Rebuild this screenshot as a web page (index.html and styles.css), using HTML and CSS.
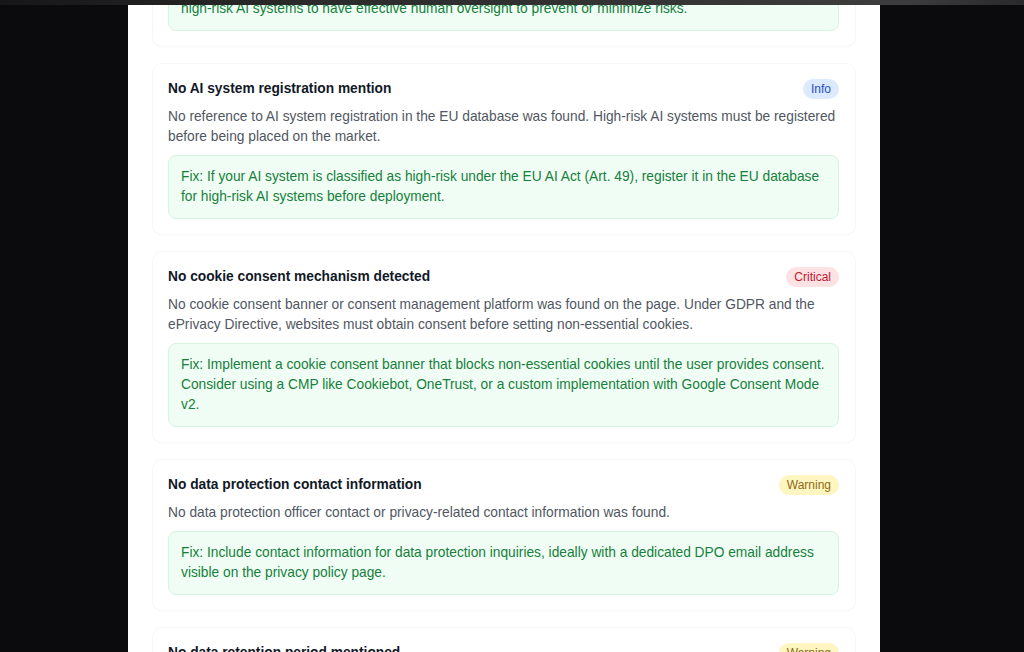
FILE: index.html
```html
<!DOCTYPE html>
<html lang="en">
<head>
<meta charset="utf-8">
<title>Compliance findings</title>
<link rel="stylesheet" href="styles.css">
</head>
<body>
<div class="topbar"></div>
<div class="stage">
  <main class="panel">
    <div class="findings">
      <section class="card">
        <div class="card-head">
          <h3 class="card-title">No human oversight measures described</h3>
          <span class="badge badge-warning">Warning</span>
        </div>
        <p class="card-desc">No information about human review of automated decisions or AI outputs was found.</p>
        <div class="fix">Fix: Describe how users can request human review of AI decisions. The EU AI Act (Art. 14) requires<br>high-risk AI systems to have effective human oversight to prevent or minimize risks.</div>
      </section>

      <section class="card">
        <div class="card-head">
          <h3 class="card-title">No AI system registration mention</h3>
          <span class="badge badge-info">Info</span>
        </div>
        <p class="card-desc">No reference to AI system registration in the EU database was found. High-risk AI systems must be registered before being placed on the market.</p>
        <div class="fix">Fix: If your AI system is classified as high-risk under the EU AI Act (Art. 49), register it in the EU database for high-risk AI systems before deployment.</div>
      </section>

      <section class="card">
        <div class="card-head">
          <h3 class="card-title">No cookie consent mechanism detected</h3>
          <span class="badge badge-critical">Critical</span>
        </div>
        <p class="card-desc">No cookie consent banner or consent management platform was found on the page. Under GDPR and the ePrivacy Directive, websites must obtain consent before setting non-essential cookies.</p>
        <div class="fix">Fix: Implement a cookie consent banner that blocks non-essential cookies until the user provides consent. Consider using a CMP like Cookiebot, OneTrust, or a custom implementation with Google Consent Mode v2.</div>
      </section>

      <section class="card">
        <div class="card-head">
          <h3 class="card-title">No data protection contact information</h3>
          <span class="badge badge-warning">Warning</span>
        </div>
        <p class="card-desc">No data protection officer contact or privacy-related contact information was found.</p>
        <div class="fix">Fix: Include contact information for data protection inquiries, ideally with a dedicated DPO email address visible on the privacy policy page.</div>
      </section>

      <section class="card">
        <div class="card-head">
          <h3 class="card-title">No data retention period mentioned</h3>
          <span class="badge badge-warning">Warning</span>
        </div>
        <p class="card-desc">No information about how long personal data is stored was found.</p>
        <div class="fix">Fix: State the retention period for each category of personal data, or the criteria used to determine it (GDPR Art. 13(2)(a)).</div>
      </section>
    </div>
  </main>
</div>
</body>
</html>
```

FILE: styles.css
```css
* {
  box-sizing: border-box;
}

html,
body {
  margin: 0;
  padding: 0;
  height: 652px;
  overflow: hidden;
  background: #0b0b0d;
  font-family: "Liberation Sans", Arial, sans-serif;
}

.topbar {
  height: 5px;
  background: linear-gradient(90deg, #161616 0%, #2b2b2b 30%, #333333 60%, #3d3d3d 88%, #2a2a2a 100%);
}

.stage {
  height: 647px;
  overflow: hidden;
  padding-left: 128px;
}

.panel {
  width: 752px;
  height: 100%;
  background: #ffffff;
  padding: 0 24px;
  overflow: hidden;
}

.findings {
  display: flex;
  flex-direction: column;
  gap: 16px;
  margin-top: -110px;
}

.card {
  background: #ffffff;
  border: 1px solid #f6f7f8;
  border-radius: 10px;
  padding: 15px;
  box-shadow: 0 1px 2px rgba(0, 0, 0, 0.015);
}

.card-head {
  display: flex;
  align-items: center;
  justify-content: space-between;
  height: 20px;
}

.card-title {
  margin: 0;
  font-size: 13.75px;
  line-height: 20px;
  font-weight: 700;
  color: #111827;
}

.badge {
  display: inline-block;
  font-size: 12px;
  line-height: 16px;
  padding: 2px 8px;
  border-radius: 999px;
  margin-right: 1px;
}

.badge-info {
  background: #dbeafe;
  color: #2550c4;
}

.badge-critical {
  background: #fde2e4;
  color: #c0182f;
}

.badge-warning {
  background: #fef6c0;
  color: #8f6a14;
}

.card-desc {
  margin: 8px 0 0;
  font-size: 13.75px;
  line-height: 20px;
  color: #505762;
}

.fix {
  margin-top: 8px;
  margin-right: 1px;
  background: #f0fdf4;
  border: 1px solid #d6f5e0;
  border-radius: 8px;
  padding: 11px 12px;
  font-size: 13.75px;
  line-height: 20px;
  color: #16803c;
}
```
